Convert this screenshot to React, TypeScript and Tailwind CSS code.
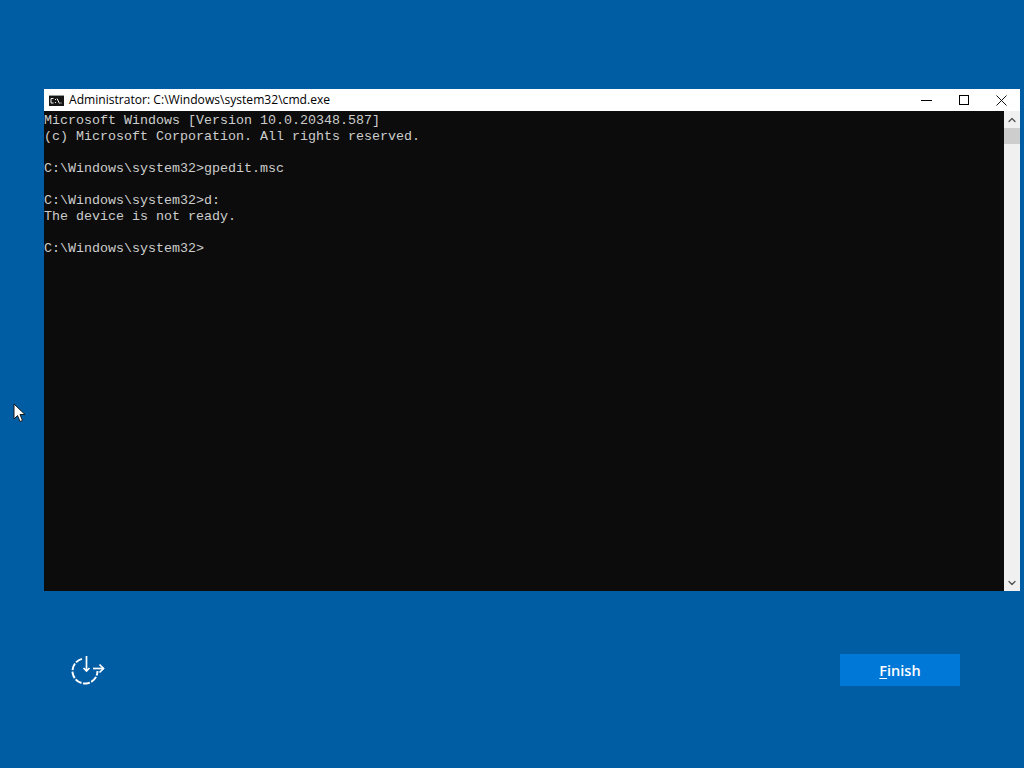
import React from 'react';
import { ChevronUp, ChevronDown } from 'lucide-react';

const consoleLines = [
  'Microsoft Windows [Version 10.0.20348.587]',
  '(c) Microsoft Corporation. All rights reserved.',
  '',
  'C:\\Windows\\system32>gpedit.msc',
  '',
  'C:\\Windows\\system32>d:',
  'The device is not ready.',
  '',
  'C:\\Windows\\system32>',
];

const CmdIcon = () => (
  <div className="ml-px w-[15px] h-[11px] bg-[#161616] border-t border-[#9a9a9a] flex items-center justify-center overflow-hidden">
    <svg width="13" height="8" viewBox="0 0 13 8" fill="none" stroke="#f0f0f0" strokeWidth="1">
      <path d="M3.500 1.500H1v4.500h2.500M5.500 2v1M5.500 5v1M7 1.500l2.500 5M11 5.500v1" />
    </svg>
  </div>
);

const RecoveryIcon = () => (
  <svg width="34" height="30" viewBox="0 0 34 30" fill="none" stroke="#ffffff" strokeWidth="2">
    <path d="M11 2.900A12.500 12.500 0 1 0 26.500 15" strokeDasharray="7 1.500" />
    <path d="M15.500 0v15" strokeWidth="1.700" />
    <path d="M12.500 12l3 3 3-3" strokeWidth="1.700" />
    <path d="M22 12.500h10.500" strokeWidth="1.700" />
    <path d="M28.500 8.500l4 4-4 4" strokeWidth="1.700" />
  </svg>
);

const App: React.FC = () => {
  return (
    <div className="relative h-[768px] w-[1024px] overflow-hidden bg-[#005ca3] font-['Liberation_Sans',sans-serif]">
      <div className="pl-11 pr-1 pt-[89px]">
        {/* Console window */}
        <div className="h-[502px] flex flex-col bg-white">
          <div className="h-[22px] flex items-center pl-[4px] shrink-0">
            <CmdIcon />
            <span className="ml-[5px] text-[12.1px] text-black whitespace-nowrap font-['Open_Sans',sans-serif]">
              Administrator: C:\Windows\system32\cmd.exe
            </span>
            <div className="ml-auto flex items-center pr-[13px] gap-[22px] text-black">
              <div className="w-[11px] h-px bg-black" />
              <div className="ml-[5px] w-[10px] h-[10px] border border-black" />
              <svg className="ml-[5px]" width="11" height="11" viewBox="0 0 11 11" stroke="#111111" fill="none">
                <path d="M0.500 0.500l10 10M10.500 0.500l-10 10" />
              </svg>
            </div>
          </div>
          <div className="flex-1 min-h-0 flex">
            <div className="flex-1 bg-[#0c0c0c] pt-0.5 font-['Liberation_Mono',monospace] text-[13.33px] leading-4 text-[#cccccc]">
              {consoleLines.map((line, i) => (
                <div key={i} className="h-4 whitespace-pre">
                  {line}
                </div>
              ))}
            </div>
            <div className="w-4 bg-[#f0f0f0] flex flex-col">
              <div className="h-[17px] flex items-center justify-center">
                <ChevronUp size={12} strokeWidth={2.5} className="text-[#505050]" />
              </div>
              <div className="h-[16px] bg-[#cdcdcd]" />
              <div className="flex-1" />
              <div className="h-[17px] flex items-center justify-center">
                <ChevronDown size={12} strokeWidth={2.5} className="text-[#505050]" />
              </div>
            </div>
          </div>
        </div>
      </div>

      {/* Footer */}
      <div className="mt-[63px] flex items-start justify-between pl-[71px] pr-16">
        <div className="pt-[2px]">
          <RecoveryIcon />
        </div>
        <button className="w-[120px] h-8 pt-px bg-[#0078d7] text-white text-[14.5px] font-['Open_Sans',sans-serif] font-semibold">
          <span className="underline underline-offset-2">F</span>inish
        </button>
      </div>

      {/* Mouse pointer */}
      <svg className="absolute left-[13px] top-[403px]" width="13" height="20" viewBox="0 0 13 20">
        <path d="M1 1v15l3.500-3.500 2.500 6 2.500-1-2.500-6h5z" fill="#ffffff" stroke="#1a1a1a" strokeWidth="1" />
      </svg>
    </div>
  );
};

export default App;
